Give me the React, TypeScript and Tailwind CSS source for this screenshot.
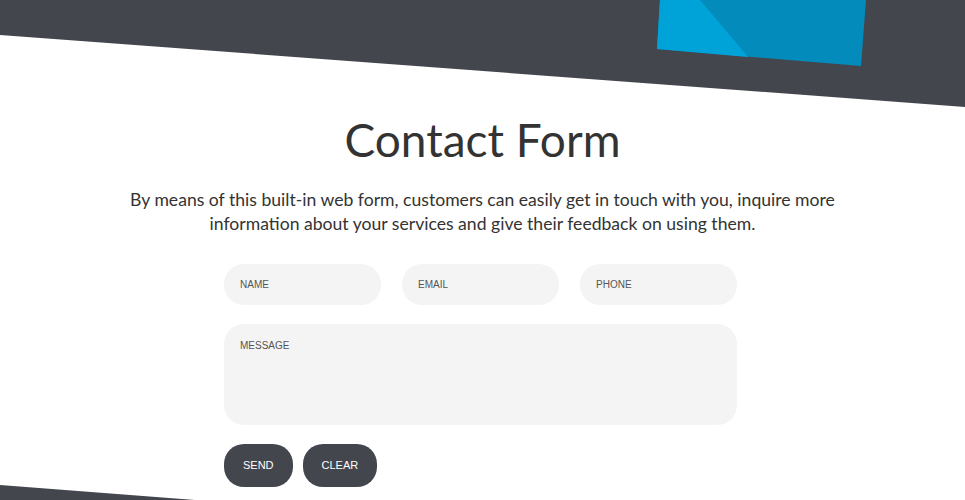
import React from "react"

const fields = ["NAME", "EMAIL", "PHONE"]

function Backdrop() {
  return (
    <svg
      className="absolute inset-0 w-full h-full pointer-events-none"
      viewBox="0 0 965 500"
      preserveAspectRatio="none"
    >
      <polygon points="0,0 965,0 965,107 0,35" fill="#44464e" />
      <polygon points="660,0 866,0 861,66 657,49" fill="#038bbb" />
      <polygon points="660,0 700,0 748,57 657,49" fill="#00a3d8" />
      <polygon points="0,485 195,500 0,500" fill="#44464e" />
    </svg>
  )
}

export default function App() {
  return (
    <div className="relative w-full h-[500px] overflow-hidden bg-white">
      <Backdrop />

      <div className="relative flex flex-col items-center pt-[109px]">
        <h1 className="text-[46px] leading-[62px] text-[#333333] font-['Lato',sans-serif]">
          Contact Form
        </h1>

        <p className="mt-[17px] text-center text-[17.6px] leading-[24px] text-[#333333] font-['Lato',sans-serif]">
          By means of this built-in web form, customers can easily get in touch with you, inquire more
          <br />
          information about your services and give their feedback on using them.
        </p>

        <form className="mt-[28px] mr-[4px] w-[513px] flex flex-col gap-[19px]" onSubmit={(e) => e.preventDefault()}>
          <div className="flex gap-[21px]">
            {fields.map((f) => (
              <div
                key={f}
                className="flex-1 h-[41px] rounded-[20px] bg-[#f4f4f4] px-4 flex items-center text-[10px] text-[#555555] font-['Liberation_Sans',sans-serif]"
              >
                {f}
              </div>
            ))}
          </div>

          <div className="h-[101px] rounded-[20px] bg-[#f4f4f4] px-4 pt-[14px] text-[10px] text-[#555555] font-['Liberation_Sans',sans-serif]">
            MESSAGE
          </div>

          <div className="flex gap-[10px]">
            <button className="h-[43px] px-[19px] rounded-[20px] bg-[#44464e] text-white text-[11px] font-['Liberation_Sans',sans-serif]">
              SEND
            </button>
            <button className="h-[43px] px-[19px] rounded-[20px] bg-[#44464e] text-white text-[11px] font-['Liberation_Sans',sans-serif]">
              CLEAR
            </button>
          </div>
        </form>
      </div>
    </div>
  )
}
